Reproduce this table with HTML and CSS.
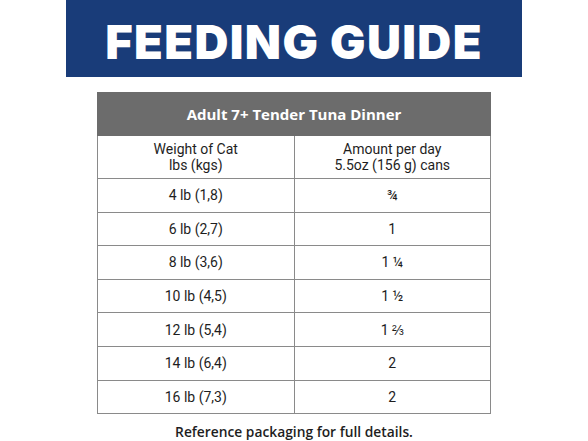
FILE: index.html
```html
<!DOCTYPE html>
<html>
<head>
<meta charset="utf-8">
<link rel="stylesheet" href="styles.css">
</head>
<body>
<div class="page">
  <div class="banner"><h1 class="title">FEEDING GUIDE</h1></div>
  <table class="guide">
    <thead>
      <tr class="product"><th colspan="2">Adult 7+ Tender Tuna Dinner</th></tr>
      <tr class="heads"><th>Weight of Cat<br>lbs (kgs)</th><th>Amount per day<br>5.5oz (156 g) cans</th></tr>
    </thead>
    <tbody>
      <tr><td>4 lb (1,8)</td><td>¾</td></tr>
      <tr><td>6 lb (2,7)</td><td>1</td></tr>
      <tr><td>8 lb (3,6)</td><td>1 ¼</td></tr>
      <tr><td>10 lb (4,5)</td><td>1 ½</td></tr>
      <tr><td>12 lb (5,4)</td><td>1 ⅔</td></tr>
      <tr><td>14 lb (6,4)</td><td>2</td></tr>
      <tr><td>16 lb (7,3)</td><td>2</td></tr>
    </tbody>
  </table>
  <p class="note">Reference packaging for full details.</p>
</div>
</body>
</html>
```

FILE: styles.css
```css
html, body {
  margin: 0;
  padding: 0;
  background: #ffffff;
}
.page {
  width: 588px;
  display: flex;
  flex-direction: column;
  align-items: center;
}
.banner {
  width: 456px;
  height: 77px;
  background: #193c79;
  display: flex;
  align-items: center;
  justify-content: center;
}
.title {
  margin: 0;
  padding-top: 6px;
  font-family: Inter, "DejaVu Sans", sans-serif;
  font-weight: 900;
  font-size: 47px;
  letter-spacing: 1.4px;
  color: #ffffff;
  line-height: 1;
}
.guide {
  margin-top: 15px;
  width: 394px;
  border-collapse: collapse;
  table-layout: fixed;
  font-family: Roboto, "Liberation Sans", sans-serif;
  color: #1e1e1e;
}
.guide th, .guide td {
  border: 1px solid #8a8a8a;
  text-align: center;
  padding: 0;
}
.product th {
  background: #6c6c6c;
  color: #ffffff;
  height: 42px;
  font-family: "Open Sans", sans-serif;
  font-weight: 700;
  font-size: 15px;
  border-color: #6c6c6c;
}
.heads th {
  height: 42px;
  font-weight: 400;
  font-size: 14px;
  line-height: 16px;
}
.guide td {
  height: 32.6px;
  font-size: 14px;
}
.note {
  margin: 9px 0 0;
  font-family: "Open Sans", sans-serif;
  font-weight: 600;
  font-size: 13.8px;
  line-height: 18px;
  color: #1e1e1e;
}
```
